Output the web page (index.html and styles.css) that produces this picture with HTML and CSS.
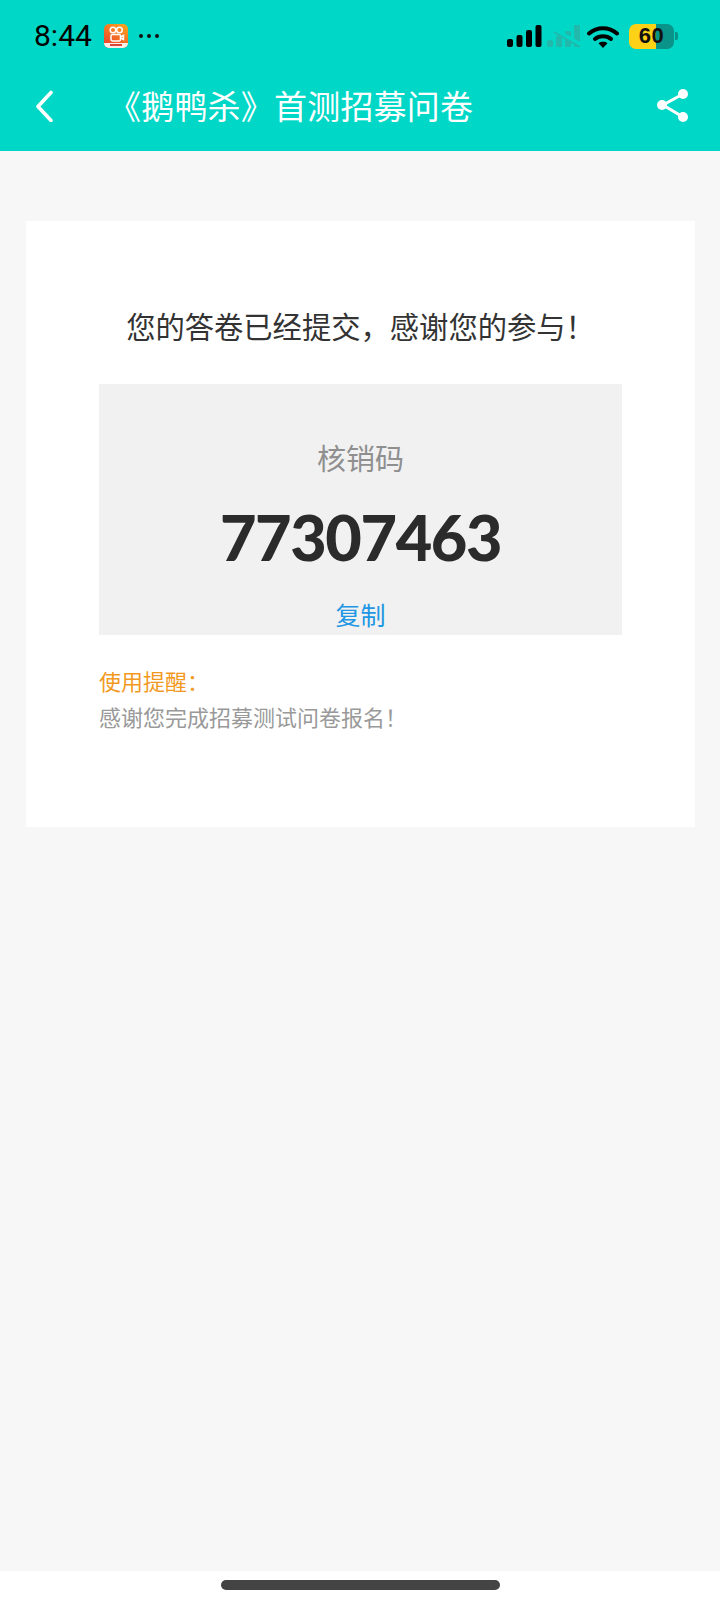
FILE: index.html
```html
<!DOCTYPE html>
<html lang="zh">
<head>
    <meta charset="UTF-8">
    <meta name="viewport" content="width=device-width, initial-scale=1.0">
    <title>《鹅鸭杀》首测招募问卷</title>
    <link rel="stylesheet" href="styles.css">
</head>
<body>
    <header class="app-header">
        <!-- Phone status bar -->
        <div class="status-bar">
            <div class="status-left">
                <span class="clock">8:44</span>
                <svg class="app-icon" width="24" height="24" viewBox="0 0 24 24">
                    <defs>
                        <linearGradient id="appGrad" x1="0.800" y1="0" x2="0.200" y2="1">
                            <stop offset="0" stop-color="#f9a11f"/>
                            <stop offset="1" stop-color="#ee3f2b"/>
                        </linearGradient>
                    </defs>
                    <rect width="24" height="24" rx="5" fill="url(#appGrad)"/>
                    <path d="M0 19h24a5 5 0 0 1-5 5H5a5 5 0 0 1-5-5z" fill="#fbeee6"/>
                    <path d="M6 20h12v2H6z" fill="#d9473a"/>
                    <g fill="none" stroke="#fff" stroke-width="1.500">
                        <circle cx="9" cy="6" r="2.800"/>
                        <circle cx="15.500" cy="6" r="2.800"/>
                        <rect x="7" y="10.500" width="9.500" height="6.500" rx="1.400"/>
                        <path d="M16.500 13l3-1.500v4l-3-1.500"/>
                    </g>
                </svg>
                <span class="dots"><i></i><i></i><i></i></span>
            </div>
            <div class="status-right">
                <svg width="35" height="24" viewBox="0 0 35 24">
                    <rect x="0" y="15" width="6" height="8" rx="2"/>
                    <rect x="9.500" y="11" width="6" height="12" rx="2"/>
                    <rect x="19" y="6" width="6" height="17" rx="2"/>
                    <rect x="28.500" y="1" width="6" height="22" rx="2"/>
                </svg>
                <svg class="signal-off" width="35" height="24" viewBox="0 0 35 24">
                    <rect x="0" y="16" width="6" height="7" rx="2"/>
                    <rect x="9" y="12" width="6" height="11" rx="1"/>
                    <rect x="18" y="7" width="6" height="16" rx="1"/>
                    <rect x="27" y="1" width="6" height="22" rx="1"/>
                    <path d="M8 6l26 15" stroke="#00d7c6" stroke-width="4"/>
                    <path d="M7 8l26 15" stroke="#22b8ac" stroke-width="2"/>
                </svg>
                <svg class="wifi" width="32" height="24" viewBox="0 0 32 24">
                    <path d="M2 9.500C10 2.500 22 2.500 30 9.500" fill="none" stroke="#000" stroke-width="4" stroke-linecap="round"/>
                    <path d="M8 15C12.500 11.200 19.500 11.200 24 15" fill="none" stroke="#000" stroke-width="4" stroke-linecap="round"/>
                    <path d="M11.500 19.200C14 17.300 18 17.300 20.500 19.200L16 24z"/>
                </svg>
                <div class="battery">
                    <div class="battery-body"><span class="battery-num">60</span></div>
                    <div class="battery-tip"></div>
                </div>
            </div>
        </div>
        <!-- Title bar -->
        <div class="title-bar">
            <svg class="back-icon" width="22" height="34" viewBox="0 0 22 34">
                <path d="M17 4.500L4 18.500l13 14" fill="none" stroke="#fff" stroke-width="3.600" stroke-linecap="round" stroke-linejoin="round"/>
            </svg>
            <h1 class="page-title">《鹅鸭杀》首测招募问卷</h1>
            <svg class="share-icon" width="34" height="36" viewBox="0 0 34 36">
                <path d="M27 7L7 18l20 12" fill="none" stroke="#fff" stroke-width="3"/>
                <circle cx="27" cy="7" r="5" fill="#fff"/>
                <circle cx="6" cy="18" r="5" fill="#fff"/>
                <circle cx="27" cy="30" r="5" fill="#fff"/>
            </svg>
        </div>
    </header>

    <main class="content">
        <section class="result-card">
            <p class="result-msg">您的答卷已经提交，感谢您的参与！</p>
            <div class="code-box">
                <p class="code-label">核销码</p>
                <p class="code-num">77307463</p>
                <a class="code-copy" href="#">复制</a>
            </div>
            <p class="tip-title">使用提醒：</p>
            <p class="tip-text">感谢您完成招募测试问卷报名！</p>
        </section>
    </main>

    <!-- Home indicator -->
    <footer class="home-bar">
        <div class="home-pill"></div>
    </footer>
</body>
</html>
```

FILE: styles.css
```css
/* The basic style of the page */
body {
    font-family: "Noto Sans CJK SC", "Noto Sans", sans-serif;
    margin: 0;
    padding: 0;
    background-color: #f7f7f7;
    height: 1600px;
    display: flex;
    flex-direction: column;
    overflow: hidden;
}

p {
    margin: 0;
}

/* The style for the header */
.app-header {
    background-color: #00d7c6;
    height: 151px;
    flex: none;
}

.status-bar {
    display: flex;
    justify-content: space-between;
    align-items: center;
    height: 24px;
    padding: 24px 42px 0 34px;
}

.status-left {
    display: flex;
    align-items: center;
}

.clock {
    font-family: "Roboto", sans-serif;
    font-size: 30px;
    color: #000;
    line-height: 24px;
}

.app-icon {
    margin-left: 12px;
}

.dots {
    display: flex;
    gap: 4px;
    margin-left: 11px;
}

.dots i {
    width: 4px;
    height: 4px;
    border-radius: 50%;
    background-color: #111;
}

.status-right {
    display: flex;
    align-items: center;
    gap: 4px;
}

.signal-off {
    fill: #22b8ac;
    margin-left: 1px;
}

.wifi {
    margin: 0 6px 0 1px;
}

.battery {
    display: flex;
    align-items: center;
}

.battery-body {
    width: 45px;
    height: 25px;
    border-radius: 7px;
    background: linear-gradient(to right, #fcd116 0, #fcd116 27px, #0a9388 27px);
    display: flex;
    align-items: center;
    justify-content: center;
}

.battery-num {
    font-family: "Liberation Sans", sans-serif;
    font-weight: bold;
    font-size: 22px;
    color: #111;
    letter-spacing: 0.5px;
}

.battery-tip {
    width: 3px;
    height: 8px;
    margin-left: 1px;
    border-radius: 0 2px 2px 0;
    background-color: #0a9388;
}

.title-bar {
    display: flex;
    align-items: center;
    height: 60px;
    margin-top: 27px;
    padding: 0 30px 0 34px;
}

.page-title {
    flex: 1;
    margin: 0 0 0 52px;
    font-size: 33px;
    font-weight: 400;
    letter-spacing: 0.2px;
    color: #fff;
    line-height: 60px;
    white-space: nowrap;
}

/* The forms of the main content area */
.content {
    flex: 1;
    padding: 70px 25px 0 26px;
}

.result-card {
    background-color: #fff;
    height: 606px;
    box-sizing: border-box;
    padding: 84px 73px 0;
}

.result-msg {
    font-size: 29.300px;
    line-height: 40px;
    color: #333;
    text-align: center;
    white-space: nowrap;
}

.code-box {
    background-color: #f1f1f1;
    height: 251px;
    margin-top: 39px;
    display: flex;
    flex-direction: column;
    align-items: center;
}

.code-label {
    margin-top: 53px;
    font-size: 29px;
    line-height: 40px;
    color: #8f8f8f;
}

.code-num {
    margin-top: 25px;
    font-family: "Lato", sans-serif;
    font-size: 63px;
    font-weight: 900;
    letter-spacing: -1.400px;
    line-height: 70px;
    color: #2b2b2b;
}

.code-copy {
    margin-top: 25px;
    font-size: 25px;
    line-height: 34px;
    color: #2196e3;
    text-decoration: none;
}

.tip-title {
    margin-top: 27px;
    font-size: 22px;
    line-height: 36px;
    color: #f29a1f;
}

.tip-text {
    font-size: 22px;
    line-height: 36px;
    color: #999;
}

/* The styles for the footer */
.home-bar {
    background-color: #fff;
    height: 29px;
    flex: none;
    display: flex;
    justify-content: center;
}

.home-pill {
    width: 279px;
    height: 10px;
    margin-top: 9px;
    border-radius: 5px;
    background-color: #444;
}
```
